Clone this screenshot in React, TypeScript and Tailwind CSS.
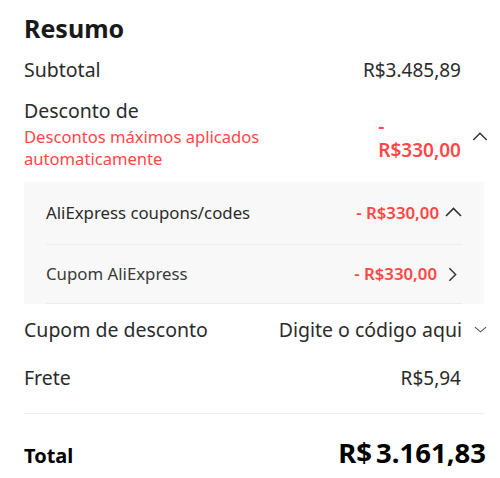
import React from 'react';

const ChevronUp = ({ className = '' }: { className?: string }) => (
  <svg className={className} viewBox="0 0 17 10" fill="none" stroke="#333" strokeWidth="1.6">
    <path d="M1 9 L8.5 1.5 L16 9" />
  </svg>
);

const ChevronRight = ({ className = '' }: { className?: string }) => (
  <svg className={className} viewBox="0 0 10 16" fill="none" stroke="#333" strokeWidth="1.6">
    <path d="M1.5 1 L8.5 8 L1.5 15" />
  </svg>
);

const ChevronDown = ({ className = '' }: { className?: string }) => (
  <svg className={className} viewBox="0 0 14 7" fill="none" stroke="#555" strokeWidth="1.2">
    <path d="M1 1 L7 6 L13 1" />
  </svg>
);

export default function App() {
  return (
    <div className="w-[500px] h-[478px] bg-white pl-[24px] pr-[16px] pt-[12px] font-['Noto_Sans',sans-serif] text-[#2b2b2b] overflow-hidden">
      <h1 className="text-[25px] leading-[32px] font-bold text-[#191919]">Resumo</h1>

      {/* Subtotal */}
      <div className="mt-[14px] flex justify-between text-[19.5px] leading-[24px]">
        <span>Subtotal</span>
        <span className="mr-[23px] text-[19px]">R$3.485,89</span>
      </div>

      {/* Desconto */}
      <div className="mt-[17px] flex items-start justify-between">
        <div>
          <div className="text-[19.5px] leading-[24px]">Desconto de</div>
          <div className="mt-[3px] text-[16.6px] leading-[22px] text-[#ff4747]">
            Descontos máximos aplicados
            <br />
            automaticamente
          </div>
        </div>
        <div className="flex items-start">
          <div className="mt-[15px] text-[19px] leading-[24px] font-semibold text-[#ff4747]">
            <div>-</div>
            <div>R$330,00</div>
          </div>
          <ChevronUp className="mt-[33px] ml-[11px] -mr-[4px] w-[16px] h-[9px]" />
        </div>
      </div>

      {/* Detalhes do desconto */}
      <div className="mt-[12px] bg-[#f8f8f8] px-[22px]">
        <div className="h-[63px] flex items-center justify-between border-b border-[#ececec] text-[16.8px]">
          <span>AliExpress coupons/codes</span>
          <div className="flex items-center">
            <span className="font-semibold text-[#ff4747]">- R$330,00</span>
            <ChevronUp className="ml-[6px] w-[17px] h-[10px] -mt-[2px]" />
          </div>
        </div>
        <div className="h-[59px] flex items-center justify-between border-b border-[#ececec] text-[16.8px]">
          <span className="text-[#3a3a3a]">Cupom AliExpress</span>
          <div className="flex items-center">
            <span className="font-semibold text-[#ff4747]">- R$330,00</span>
            <ChevronRight className="ml-[11px] mr-[5px] w-[9px] h-[15px]" />
          </div>
        </div>
      </div>

      {/* Cupom */}
      <div className="mt-[14px] flex justify-between items-center text-[19.5px] leading-[24px]">
        <span>Cupom de desconto</span>
        <div className="flex items-center">
          <span>Digite o código aqui</span>
          <ChevronDown className="ml-[12px] -mr-[3px] w-[13px] h-[7px] -mt-[1px]" />
        </div>
      </div>

      {/* Frete */}
      <div className="mt-[24px] flex justify-between text-[19.5px] leading-[24px]">
        <span>Frete</span>
        <span className="mr-[23px] text-[19px]">R$5,94</span>
      </div>

      <div className="mt-[23px] border-t border-[#eeeeee]" />

      {/* Total */}
      <div className="mt-[21px] flex justify-between items-baseline leading-[36px]">
        <span className="text-[20px] font-bold text-black">Total</span>
        <span className="text-[27.5px] font-bold text-black -mr-[2px]">
          R$<span className="ml-[4px]">3.161,83</span>
        </span>
      </div>
    </div>
  );
}
